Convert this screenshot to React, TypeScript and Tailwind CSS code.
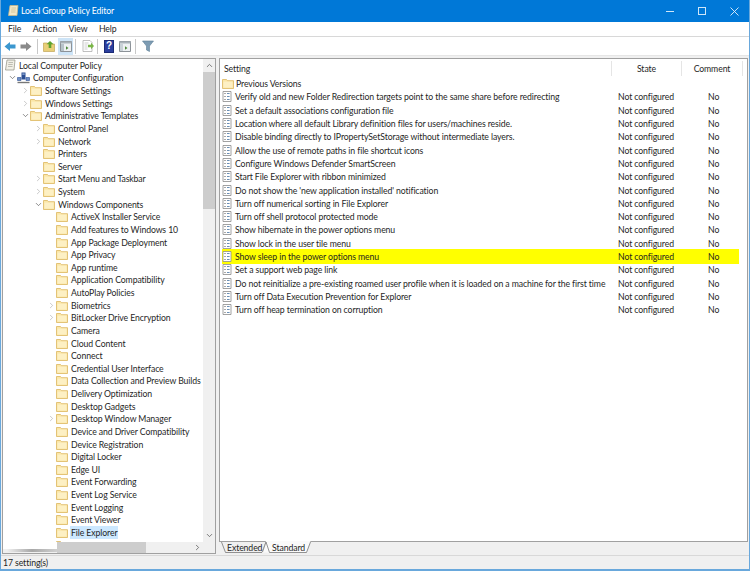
import { ChevronDown, ChevronRight, ChevronUp } from "lucide-react";

type Node = { label: string; level: number; arrow?: "open" | "closed"; icon?: "policy" | "computer"; selected?: boolean };

const tree: Node[] = [
  { label: "Local Computer Policy", level: 0, icon: "policy" },
  { label: "Computer Configuration", level: 0, arrow: "open", icon: "computer" },
  { label: "Software Settings", level: 1, arrow: "closed" },
  { label: "Windows Settings", level: 1, arrow: "closed" },
  { label: "Administrative Templates", level: 1, arrow: "open" },
  { label: "Control Panel", level: 2, arrow: "closed" },
  { label: "Network", level: 2, arrow: "closed" },
  { label: "Printers", level: 2 },
  { label: "Server", level: 2 },
  { label: "Start Menu and Taskbar", level: 2, arrow: "closed" },
  { label: "System", level: 2, arrow: "closed" },
  { label: "Windows Components", level: 2, arrow: "open" },
  { label: "ActiveX Installer Service", level: 3 },
  { label: "Add features to Windows 10", level: 3 },
  { label: "App Package Deployment", level: 3 },
  { label: "App Privacy", level: 3 },
  { label: "App runtime", level: 3 },
  { label: "Application Compatibility", level: 3 },
  { label: "AutoPlay Policies", level: 3 },
  { label: "Biometrics", level: 3, arrow: "closed" },
  { label: "BitLocker Drive Encryption", level: 3, arrow: "closed" },
  { label: "Camera", level: 3 },
  { label: "Cloud Content", level: 3 },
  { label: "Connect", level: 3 },
  { label: "Credential User Interface", level: 3 },
  { label: "Data Collection and Preview Builds", level: 3 },
  { label: "Delivery Optimization", level: 3 },
  { label: "Desktop Gadgets", level: 3 },
  { label: "Desktop Window Manager", level: 3, arrow: "closed" },
  { label: "Device and Driver Compatibility", level: 3 },
  { label: "Device Registration", level: 3 },
  { label: "Digital Locker", level: 3 },
  { label: "Edge UI", level: 3 },
  { label: "Event Forwarding", level: 3 },
  { label: "Event Log Service", level: 3 },
  { label: "Event Logging", level: 3 },
  { label: "Event Viewer", level: 3 },
  { label: "File Explorer", level: 3, selected: true },
];

const settings = [
  "Verify old and new Folder Redirection targets point to the same share before redirecting",
  "Set a default associations configuration file",
  "Location where all default Library definition files for users/machines reside.",
  "Disable binding directly to IPropertySetStorage without intermediate layers.",
  "Allow the use of remote paths in file shortcut icons",
  "Configure Windows Defender SmartScreen",
  "Start File Explorer with ribbon minimized",
  "Do not show the 'new application installed' notification",
  "Turn off numerical sorting in File Explorer",
  "Turn off shell protocol protected mode",
  "Show hibernate in the power options menu",
  "Show lock in the user tile menu",
  "Show sleep in the power options menu",
  "Set a support web page link",
  "Do not reinitialize a pre-existing roamed user profile when it is loaded on a machine for the first time",
  "Turn off Data Execution Prevention for Explorer",
  "Turn off heap termination on corruption",
];

const indent = ["w-[5px]", "w-[18px]", "w-[31px]", "w-[44px]"];

const Folder = () => (
  <svg viewBox="0 0 12 11" className="w-[12px] h-[11px] shrink-0">
    <path d="M0.5 1.5h4l1 1.2h6v7.8h-11z" fill="#fbe6a6" stroke="#dcb65e" strokeWidth="0.8" />
    <path d="M1.5 3.6h9v6h-9z" fill="#fdf0c4" />
  </svg>
);

const SettingIcon = () => (
  <svg viewBox="0 0 10 11" className="w-[10px] h-[11px] shrink-0">
    <path d="M1 .5h8v10h-8z" fill="#fff" stroke="#8a8a8a" strokeWidth="0.8" />
    <path d="M2.5 2.5h1M2.5 5.5h1M2.5 8.5h1" stroke="#555" strokeWidth="1" />
    <path d="M5 2.5h2.6M5 5.5h2.6M5 8.5h2.6" stroke="#6a8fb5" strokeWidth="1" />
  </svg>
);

const PolicyIcon = ({ size = "w-[12px] h-[13px]", dark = false }: { size?: string; dark?: boolean }) => (
  <svg viewBox="0 0 12 13" className={size + " shrink-0"}>
    <path d="M3 1h8l-1 10H1.5z" fill={dark ? "#f3e8c8" : "#f1efe6"} stroke={dark ? "#c9b98a" : "#9a9a8e"} strokeWidth="0.8" />
    <path d="M4.5 3.5h4.5M4.2 5.5h4.5M4 7.5h4.5" stroke={dark ? "#c9b98a" : "#a8a89c"} strokeWidth="0.7" />
  </svg>
);

const ComputerIcon = () => (
  <svg viewBox="0 0 13 12" className="w-[13px] h-[12px] shrink-0">
    <path d="M4.5 .5h4v7h-4z" fill="#2c4f93" />
    <path d="M5.3 1.5h2.4v1.2h-2.4z" fill="#9fb8e0" />
    <path d="M.5 5.5h3.5v3h-3.5zM9 5.5h3.5v3h-3.5z" fill="#6f8fc6" stroke="#2c4f93" strokeWidth="0.6" />
    <path d="M.5 10.5h12" stroke="#777" strokeWidth="1.4" />
  </svg>
);

const ToolSep = () => <div className="w-px h-[15px] bg-[#c8c8c8]" />;

const Arrow = ({ color, flip }: { color: string; flip?: boolean }) => (
  <svg viewBox="0 0 12 11" className="w-[12px] h-[11px]" style={flip ? { transform: "scaleX(-1)" } : undefined}>
    <path d="M0.5 5.5 6 1v2.5h5.5v4H6V10z" fill={color} />
  </svg>
);

const Toolbar = () => (
  <div className="h-[19px] flex items-center pl-[3px] border-b border-[#e6e6e6]">
    <Arrow color="#3b97cf" />
    <div className="w-[4px]" />
    <Arrow color="#8a8a8a" flip />
    <div className="w-[5px]" />
    <ToolSep />
    <div className="w-[5px]" />
    <svg viewBox="0 0 12 12" className="w-[12px] h-[12px]">
      <path d="M.5 3h4l1 1h6v7.5h-11z" fill="#e9cf78" stroke="#b89b46" strokeWidth="0.6" />
      <path d="M7 1 3.5 4.2h2.2V8h2.6V4.2h2.2z" fill="#5fa32e" />
    </svg>
    <div className="w-[3px]" />
    <div className="w-[15px] h-[17px] bg-[#cde4f7] flex items-center justify-center">
      <svg viewBox="0 0 12 11" className="w-[12px] h-[11px]">
        <path d="M.5 .5h11v10h-11z" fill="#eef1f3" stroke="#8c9298" />
        <path d="M.5 .5h11v2h-11z" fill="#a9b2b8" />
        <path d="M1 3h3v7H1z" fill="#b7c3ca" />
        <path d="M6 5.2 8.5 7 6 8.8z" fill="#4f8a3c" />
      </svg>
    </div>
    <div className="w-[2px]" />
    <ToolSep />
    <div className="w-[6px]" />
    <svg viewBox="0 0 12 12" className="w-[12px] h-[12px]">
      <path d="M1 .5h7l2 2v9H1z" fill="#fff" stroke="#a5a5a5" strokeWidth="0.7" />
      <path d="M2.5 3h4M2.5 5h3M2.5 7h3M2.5 9h3" stroke="#b9b9b9" strokeWidth="0.7" />
      <path d="M6 4.8h3V2.8L12 6 9 9.2V7.2H6z" fill="#7ab648" />
    </svg>
    <div className="w-[3px]" />
    <ToolSep />
    <div className="w-[6px]" />
    <div className="w-[10px] h-[13px] bg-[#2b3f9e] border border-[#1b2a75] flex items-center justify-center text-white text-[10px] leading-none font-bold font-['Liberation_Sans',sans-serif]">?</div>
    <div className="w-[5px]" />
    <svg viewBox="0 0 12 11" className="w-[12px] h-[11px]">
      <path d="M.5 .5h11v10h-11z" fill="#eef1f3" stroke="#8c9298" />
      <path d="M.5 .5h11v2h-11z" fill="#a9b2b8" />
      <path d="M1 3h3v7H1z" fill="#c9d2d7" />
      <path d="M6 5.2 8.5 7 6 8.8z" fill="#4f8a3c" />
    </svg>
    <div className="w-[4px]" />
    <ToolSep />
    <div className="w-[6px]" />
    <svg viewBox="0 0 12 12" className="w-[12px] h-[12px]">
      <path d="M.5 1h11L7.5 6v5.5l-3-1.5V6z" fill="#7d9cb3" stroke="#5f7f97" strokeWidth="0.6" />
    </svg>
  </div>
);

export default function App() {
  return (
    <div className="w-[750px] h-[571px] flex flex-col overflow-hidden bg-[#f0f0f0] border-x border-b-2 border-[#69a8dc] text-[#1f1f1f] text-[8.7px] tracking-[-0.1px] font-['Lato',sans-serif]">
      {/* title bar */}
      <div className="-mx-px h-[22px] shrink-0 bg-[#0078d7] flex items-center text-white pl-[7px]">
        <PolicyIcon size="w-[12px] h-[14px]" dark />
        <span className="ml-[2px]">Local Group Policy Editor</span>
        <div className="ml-auto flex items-center pr-[11px] gap-[24px]">
          <div className="w-[8px] h-px bg-[#cfe6f8]" />
          <div className="w-[8px] h-[8px] border border-[#cfe6f8]" />
          <svg viewBox="0 0 9 9" className="w-[9px] h-[9px]">
            <path d="M.5 .5l8 8M8.5 .5l-8 8" stroke="#e4f1fb" strokeWidth="0.9" />
          </svg>
        </div>
      </div>
      {/* menu */}
      <div className="h-[15px] shrink-0 bg-white flex items-center gap-[11.5px] pl-[7px] border-b border-[#d8d8d8]">
        <span>File</span>
        <span>Action</span>
        <span>View</span>
        <span>Help</span>
      </div>
      <div className="bg-white shrink-0">
        <Toolbar />
      </div>

      <div className="flex-1 min-h-0 flex gap-[3px] pt-[2px] px-px">
        {/* tree */}
        <div className="w-[214px] shrink-0 bg-white border border-[#a0a0a0] flex flex-col">
          <div className="flex-1 min-h-0 flex">
            <div className="flex-1 min-w-0 overflow-hidden">
              {tree.map((n) => (
                <div key={n.label} className="h-[12.63px] flex items-center whitespace-nowrap">
                  {n.icon === "policy" ? (
                    <div className="w-[1px] shrink-0" />
                  ) : (
                    <>
                      <div className={indent[n.level] + " shrink-0"} />
                      <div className="w-[9px] shrink-0 flex justify-center">
                        {n.arrow === "open" && <ChevronDown size={9} strokeWidth={1.6} color="#444" />}
                        {n.arrow === "closed" && <ChevronRight size={9} strokeWidth={1.4} color="#999" />}
                      </div>
                    </>
                  )}
                  {n.icon === "policy" ? <PolicyIcon /> : n.icon === "computer" ? <ComputerIcon /> : <Folder />}
                  <span className={"ml-[2px] px-px " + (n.selected ? "bg-[#cce8ff]" : "")}>{n.label}</span>
                </div>
              ))}
              <div className="h-[12.63px] flex items-center">
                <div className="w-[53px] shrink-0" />
                <Folder />
              </div>
            </div>
            <div className="w-[12px] shrink-0 bg-[#f0f0f0] flex flex-col items-center">
              <ChevronUp size={9} strokeWidth={2} color="#555" className="my-[2px]" />
              <div className="h-[137px] w-full bg-[#cdcdcd]" />
              <ChevronDown size={9} strokeWidth={2} color="#555" className="mt-auto mb-[2px]" />
            </div>
          </div>
          <div className="h-[11px] shrink-0 bg-[#f0f0f0] flex">
            <div className="w-[54px] h-full flex flex-col">
              <div className="h-[7px] bg-white" />
              <div className="h-[3px] ml-[4px] bg-gradient-to-r from-[#f0f0f0] via-[#a8a8a8] to-[#d0d0d0]" />
            </div>
            <div className="w-[89px] h-full bg-[#cdcdcd]" />
            <div className="ml-auto mr-[13px] flex items-center">
              <ChevronRight size={9} strokeWidth={2} color="#555" />
            </div>
          </div>
        </div>

        {/* settings */}
        <div className="flex-1 min-w-0 flex flex-col">
          <div className="flex-1 min-h-0 bg-white border border-[#a0a0a0] border-b-0">
            <div className="h-[17px] pt-[2px] flex items-center">
              <div className="w-[392px] pl-[4px] border-r border-[#e5e5e5] h-full flex items-center">Setting</div>
              <div className="w-[70px] border-r border-[#e5e5e5] h-full flex items-center justify-center">State</div>
              <div className="w-[61px] border-r border-[#e5e5e5] h-full flex items-center justify-center">Comment</div>
            </div>
            <div className="pt-[1px] pl-[2px] pr-[8px]">
              <div className="h-[13.3px] flex items-center">
                <Folder />
                <span className="ml-[2px]">Previous Versions</span>
              </div>
              {settings.map((s) => (
                <div
                  key={s}
                  className={s === "Show sleep in the power options menu" ? "h-[15px] -my-[0.85px] flex items-center bg-[#ffff00]" : "h-[13.3px] flex items-center"}
                >
                  <div className="w-[396px] flex items-center whitespace-nowrap">
                    <SettingIcon />
                    <span className="ml-[3px]">{s}</span>
                  </div>
                  <span className="w-[90px]">Not configured</span>
                  <span>No</span>
                </div>
              ))}
            </div>
          </div>
          <div className="h-[13px] shrink-0 flex items-start border-t border-[#a0a0a0] pl-[2px]">
            <svg viewBox="0 0 90 13" className="w-[90px] h-[13px] -mt-px shrink-0">
              <path d="M0.5 1 4.5 11.5H41L45 1" fill="#f0f0f0" stroke="#777" strokeWidth="0.8" />
              <path d="M45 0 41 11.5H85.5L89.5 0z" fill="#fafafa" />
              <path d="M41.5 11 45 1 48.5 11.5H85.5L89.5 1" fill="none" stroke="#777" strokeWidth="0.8" />
            </svg>
            <div className="-ml-[90px] w-[90px] h-[11px] flex items-center z-10">
              <span className="w-[51px] pl-[6px]">Extended</span>
              <span>Standard</span>
            </div>
          </div>
        </div>
      </div>

      {/* status bar */}
      <div className="h-[14px] shrink-0 border-t border-[#d8d8d8] flex items-center pl-[2px] mt-[1px]">17 setting(s)</div>
    </div>
  );
}
